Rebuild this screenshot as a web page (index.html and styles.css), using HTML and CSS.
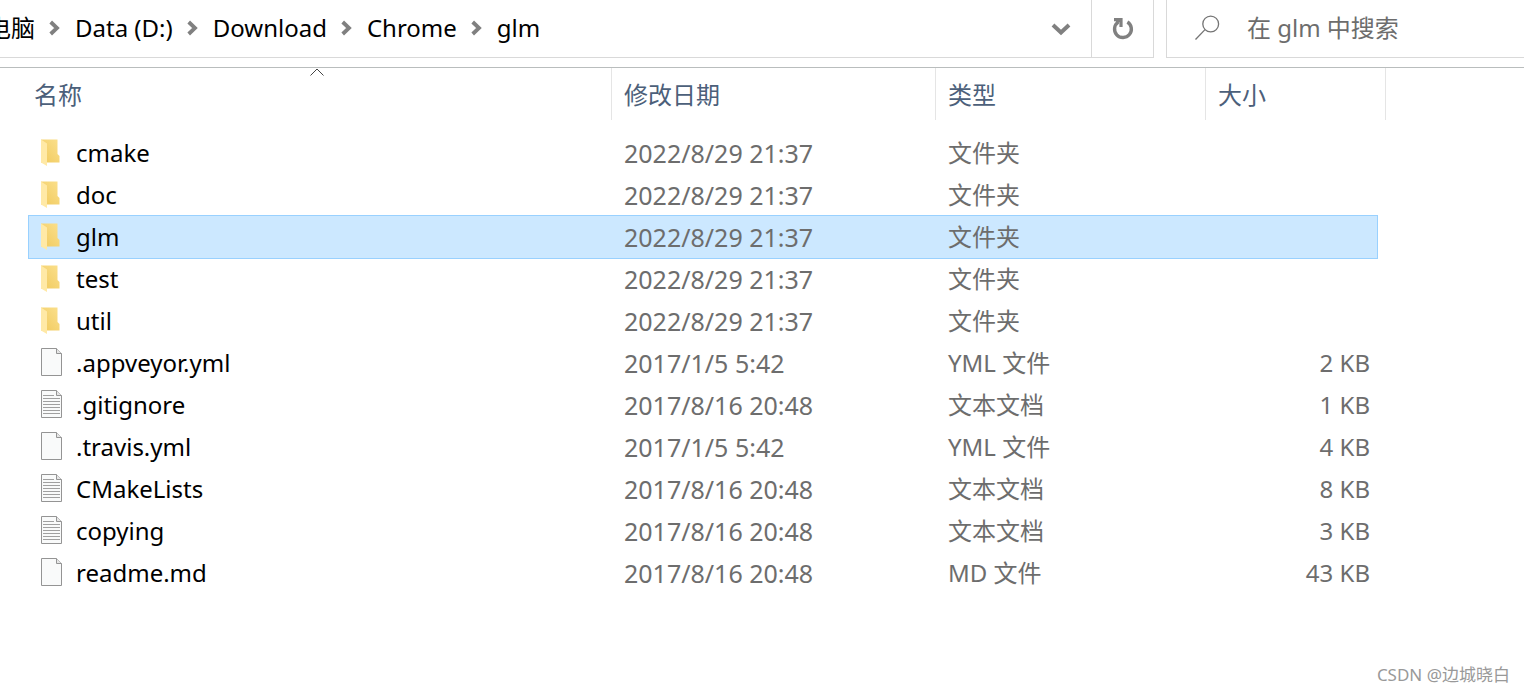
FILE: index.html
```html
<!DOCTYPE html>
<html lang="zh-CN">
<head>
    <meta charset="UTF-8">
    <title>glm</title>
    <link rel="stylesheet" href="styles.css">
</head>
<body>
    <!-- icons used more than once -->
    <svg class="defs" width="0" height="0">
        <defs>
            <linearGradient id="front" x1="0" y1="1" x2="1" y2="0">
                <stop offset="0" stop-color="#f0c95c"/>
                <stop offset="1" stop-color="#fbe08d"/>
            </linearGradient>
        </defs>
        <symbol id="chevron" viewBox="0 0 11 16">
            <path d="M1.7 2 L8 8 L1.7 14" fill="none" stroke="#808080" stroke-width="3.8"/>
        </symbol>
        <symbol id="folder" viewBox="0 0 22 28">
            <path d="M0 1.5 H16.5 V16 L18.5 18 V24.5 H0 Z" fill="url(#front)"/>
            <path d="M0 1.5 L6 5.5 V28 L0 24.5 Z" fill="#ffe9a6"/>
        </symbol>
        <symbol id="file" viewBox="0 0 22 28">
            <path d="M.5 .5 H15.5 L20.5 5.5 V27.5 H.5 Z" fill="#f9fafa" stroke="#949494"/>
            <path d="M15.5 .5 V5.5 H20.5" fill="#e6e6e6" stroke="#949494"/>
        </symbol>
        <symbol id="text" viewBox="0 0 22 28">
            <use href="#file"/>
            <path d="M2 5.5 H13 M2 8.5 H19 M2 11.5 H19 M2 14.5 H19 M2 17.5 H19 M2 20.5 H19 M2 23.5 H19" stroke="#a0a0a0"/>
        </symbol>
    </svg>

    <header class="toolbar">
        <div class="address">
            <nav class="crumbs">
                <a href="#">电脑</a>
                <svg class="sep"><use href="#chevron"/></svg>
                <a href="#">Data (D:)</a>
                <svg class="sep"><use href="#chevron"/></svg>
                <a href="#">Download</a>
                <svg class="sep"><use href="#chevron"/></svg>
                <a href="#">Chrome</a>
                <svg class="sep"><use href="#chevron"/></svg>
                <a href="#">glm</a>
            </nav>
            <button class="history" aria-label="历史记录">
                <svg width="20" height="14" viewBox="0 0 20 14"><path d="M2 3 L10 10.5 L18 3" fill="none" stroke="#808080" stroke-width="4"/></svg>
            </button>
            <button class="refresh" aria-label="刷新">
                <svg width="22" height="24" viewBox="0 0 22 24">
                    <path d="M15.4 5 A8.4 8.4 0 1 1 6.2 5.2" fill="none" stroke="#808080" stroke-width="3.4"/>
                    <path d="M2 2.6 H9 V10" fill="none" stroke="#808080" stroke-width="3.2"/>
                    <path d="M4.5 5.5 L9 2.5" stroke="#808080" stroke-width="3"/>
                </svg>
            </button>
        </div>
        <label class="search">
            <svg width="26" height="26" viewBox="0 0 26 26"><circle cx="15.7" cy="9" r="7.9" fill="none" stroke="#747474" stroke-width="1.3"/><path d="M10 14.6 L.5 24.5" stroke="#747474" stroke-width="1.3"/></svg>
            <input type="text" placeholder="在 glm 中搜索" aria-label="在 glm 中搜索">
        </label>
    </header>

    <main>
        <table class="files">
            <colgroup>
                <col class="c-edge"><col class="c-name"><col class="c-date"><col class="c-type"><col class="c-size"><col class="c-end">
            </colgroup>
            <thead>
                <tr>
                    <th class="sorted" colspan="2">
                        <svg class="caret" width="14" height="8" viewBox="0 0 14 8"><path d="M.5 7.5 L7 1 L13.5 7.5" fill="none" stroke="#444"/></svg>
                        名称
                    </th>
                    <th>修改日期</th>
                    <th>类型</th>
                    <th colspan="2">大小</th>
                </tr>
            </thead>
            <tbody>
                <tr><td></td><td class="name"><svg><use href="#folder"/></svg>cmake</td><td class="date">2022/8/29 21:37</td><td>文件夹</td><td></td></tr>
                <tr><td></td><td class="name"><svg><use href="#folder"/></svg>doc</td><td class="date">2022/8/29 21:37</td><td>文件夹</td><td></td></tr>
                <tr class="selected"><td></td><td class="name"><svg><use href="#folder"/></svg>glm</td><td class="date">2022/8/29 21:37</td><td>文件夹</td><td></td></tr>
                <tr><td></td><td class="name"><svg><use href="#folder"/></svg>test</td><td class="date">2022/8/29 21:37</td><td>文件夹</td><td></td></tr>
                <tr><td></td><td class="name"><svg><use href="#folder"/></svg>util</td><td class="date">2022/8/29 21:37</td><td>文件夹</td><td></td></tr>
                <tr><td></td><td class="name"><svg><use href="#file"/></svg>.appveyor.yml</td><td class="date">2017/1/5 5:42</td><td>YML 文件</td><td class="size">2 KB</td></tr>
                <tr><td></td><td class="name"><svg><use href="#text"/></svg>.gitignore</td><td class="date">2017/8/16 20:48</td><td>文本文档</td><td class="size">1 KB</td></tr>
                <tr><td></td><td class="name"><svg><use href="#file"/></svg>.travis.yml</td><td class="date">2017/1/5 5:42</td><td>YML 文件</td><td class="size">4 KB</td></tr>
                <tr><td></td><td class="name"><svg><use href="#text"/></svg>CMakeLists</td><td class="date">2017/8/16 20:48</td><td>文本文档</td><td class="size">8 KB</td></tr>
                <tr><td></td><td class="name"><svg><use href="#text"/></svg>copying</td><td class="date">2017/8/16 20:48</td><td>文本文档</td><td class="size">3 KB</td></tr>
                <tr><td></td><td class="name"><svg><use href="#file"/></svg>readme.md</td><td class="date">2017/8/16 20:48</td><td>MD 文件</td><td class="size">43 KB</td></tr>
            </tbody>
        </table>
    </main>

    <div class="watermark">CSDN @边城晓白</div>
</body>
</html>
```

FILE: styles.css
```css
* { box-sizing: border-box; }
body { margin: 0; min-height: 100vh; position: relative; overflow-x: hidden; background: #fff; color: #000; font-family: "Noto Sans", "Noto Sans CJK SC", sans-serif; font-size: 24px; line-height: 34px; }
button { background: none; border: none; padding: 0; display: flex; align-items: center; justify-content: center; cursor: pointer; }
.defs { position: absolute; }

/* address bar and search */
.toolbar { display: flex; gap: 12px; height: 68px; padding-bottom: 9px; border-bottom: 1px solid #b9bdbd; }
.address { flex: 1; display: flex; border: 1px solid #d9d9d9; border-width: 0 1px 1px 0; }
.crumbs { flex: 1; display: flex; align-items: center; margin-left: -13px; padding-bottom: 2px; }
.crumbs a { color: #000; text-decoration: none; white-space: nowrap; }
.sep { width: 11px; height: 16px; margin: 0 15px 0 14px; }
.history { width: 60px; }
.refresh { width: 62px; border-left: 1px solid #d9d9d9; }
.search { width: 358px; display: flex; align-items: center; gap: 26px; padding: 0 0 2px 28px; border: 1px solid #d9d9d9; border-width: 0 0 1px 1px; }
.search input { flex: 1; min-width: 0; border: none; outline: none; padding: 0; font: inherit; background: none; }
.search input::placeholder { color: #6d6d6d; opacity: 1; }

/* file list */
.files { table-layout: fixed; width: 1364px; margin-left: 22px; border-spacing: 0; }
.c-edge { width: 6px; }
.c-name { width: 584px; }
.c-date { width: 324px; }
.c-type { width: 270px; }
.c-size { width: 172px; }
.c-end { width: 8px; }
th { position: relative; height: 52px; padding: 2px 12px 0; border-right: 1px solid #e5e5e5; color: #4c607a; font-weight: normal; text-align: left; }
thead::after { content: ""; display: block; height: 12px; }
.caret { position: absolute; top: 0; left: 50%; margin-left: -7px; }
td { height: 42px; padding: 0 12px; color: #6d6d6d; white-space: nowrap; }
td:first-child { padding: 0; }
.date { font-size: 25px; }
.name { color: #000; border-left: 1px solid transparent; }
.name svg { width: 22px; height: 28px; margin-right: 13px; vertical-align: -4px; }
.size { padding-right: 8px; text-align: right; }
.selected td:not(:first-child) { background: #cce8ff; box-shadow: 0 -1px #99d1ff, 0 1px #99d1ff; }
.selected .name { border-left-color: #99d1ff; }
.selected td:last-child { border-right: 1px solid #99d1ff; }

.watermark { position: absolute; right: 14px; bottom: 6px; color: #999; font-size: 17px; line-height: 24px; }
```
